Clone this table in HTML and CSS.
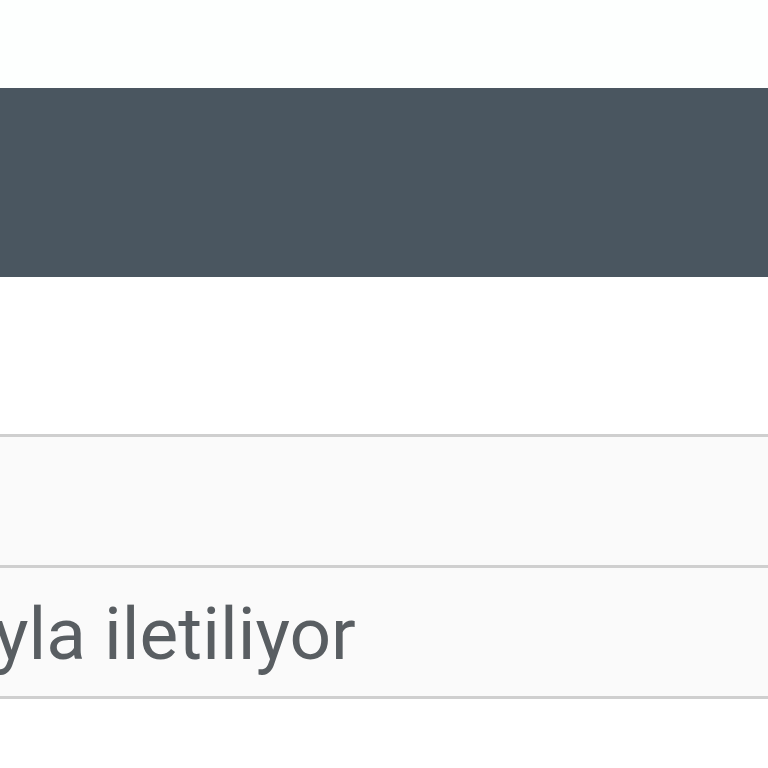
FILE: index.html
```html
<!DOCTYPE html>
<html lang="tr">
<head>
<meta charset="utf-8">
<link rel="stylesheet" href="styles.css">
</head>
<body>
<div class="page">
  <div class="top"></div>
  <header class="bar"></header>
  <div class="spacer"></div>
  <div class="table">
    <div class="row"></div>
    <div class="row"><span class="label">yla iletiliyor</span></div>
  </div>
</div>
</body>
</html>
```
FILE: styles.css
```css
html, body {
  margin: 0;
  padding: 0;
  background: #ffffff;
  overflow: hidden;
}
.page {
  width: 768px;
  height: 768px;
  display: flex;
  flex-direction: column;
}
.top {
  height: 88px;
  background: #fdfffe;
}
.bar {
  height: 189px;
  background: #4a5660;
}
.spacer {
  height: 157px;
  background: #ffffff;
}
.table {
  border-top: 3px solid #cfcfcf;
}
.row {
  height: 128px;
  background: #fafafa;
  border-bottom: 3px solid #cfcfcf;
  display: flex;
  align-items: center;
  overflow: hidden;
}
.label {
  font-family: Roboto, "Liberation Sans", sans-serif;
  font-size: 73px;
  line-height: 1;
  color: #595e62;
  white-space: nowrap;
  margin-left: -6px;
  padding-top: 4px;
}
```
